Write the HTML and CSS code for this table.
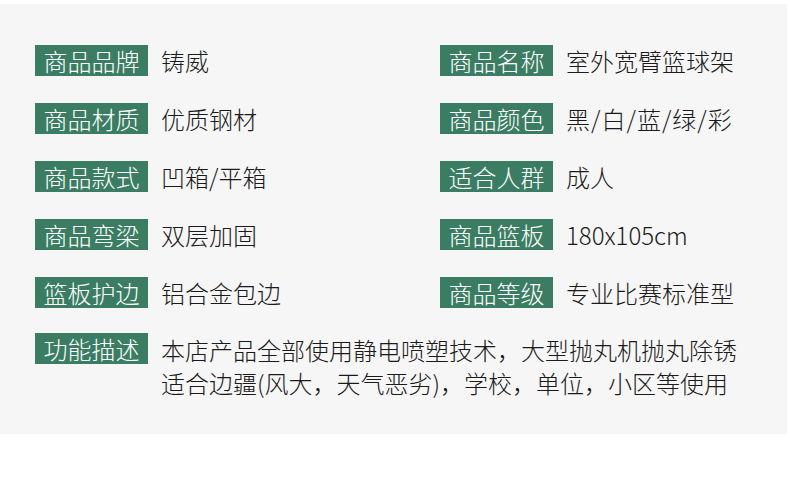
FILE: index.html
```html
<!DOCTYPE html>
<html lang="zh">
<head>
<meta charset="utf-8">
<link rel="stylesheet" href="styles.css">
</head>
<body>
<div class="panel">
  <div class="grid">
    <div class="item"><span class="label">商品品牌</span><span class="value">铸威</span></div>
    <div class="item"><span class="label">商品名称</span><span class="value">室外宽臂篮球架</span></div>
    <div class="item"><span class="label">商品材质</span><span class="value">优质钢材</span></div>
    <div class="item"><span class="label">商品颜色</span><span class="value value-spaced">黑/白/蓝/绿/彩</span></div>
    <div class="item"><span class="label">商品款式</span><span class="value">凹箱/平箱</span></div>
    <div class="item"><span class="label">适合人群</span><span class="value">成人</span></div>
    <div class="item"><span class="label">商品弯梁</span><span class="value">双层加固</span></div>
    <div class="item"><span class="label">商品篮板</span><span class="value">180x105cm</span></div>
    <div class="item"><span class="label">篮板护边</span><span class="value">铝合金包边</span></div>
    <div class="item"><span class="label">商品等级</span><span class="value">专业比赛标准型</span></div>
  </div>
  <div class="desc">
    <span class="label">功能描述</span>
    <p class="desc-text">本店产品全部使用静电喷塑技术，大型抛丸机抛丸除锈适合边疆(风大，天气恶劣)，学校，单位，小区等使用</p>
  </div>
</div>
</body>
</html>
```
FILE: styles.css
```css
html, body {
  margin: 0;
  padding: 0;
  background: #ffffff;
}
body {
  font-family: "Noto Sans CJK SC", "Noto Sans", sans-serif;
  font-weight: 300;
  color: #1a1a1a;
}
.panel {
  margin-top: 4px;
  width: 787px;
  height: 430px;
  box-sizing: border-box;
  background: #f6f6f6;
  padding: 41px 0 0 35px;
}
.grid {
  display: grid;
  grid-template-columns: 405px auto;
  row-gap: 27px;
}
.item {
  display: flex;
  align-items: center;
  gap: 13px;
}
.label {
  flex: none;
  width: 113px;
  height: 31px;
  background: #3b7d62;
  color: #ffffff;
  font-size: 24px;
  line-height: 31px;
  text-align: center;
  white-space: nowrap;
}
.value {
  font-size: 24px;
  line-height: 31px;
  white-space: nowrap;
}
.value-spaced {
  letter-spacing: 1px;
}
.desc {
  display: flex;
  align-items: flex-start;
  gap: 13px;
  margin-top: 25px;
}
.desc-text {
  margin: 0;
  width: 585px;
  font-size: 24px;
  line-height: 33px;
}
```
